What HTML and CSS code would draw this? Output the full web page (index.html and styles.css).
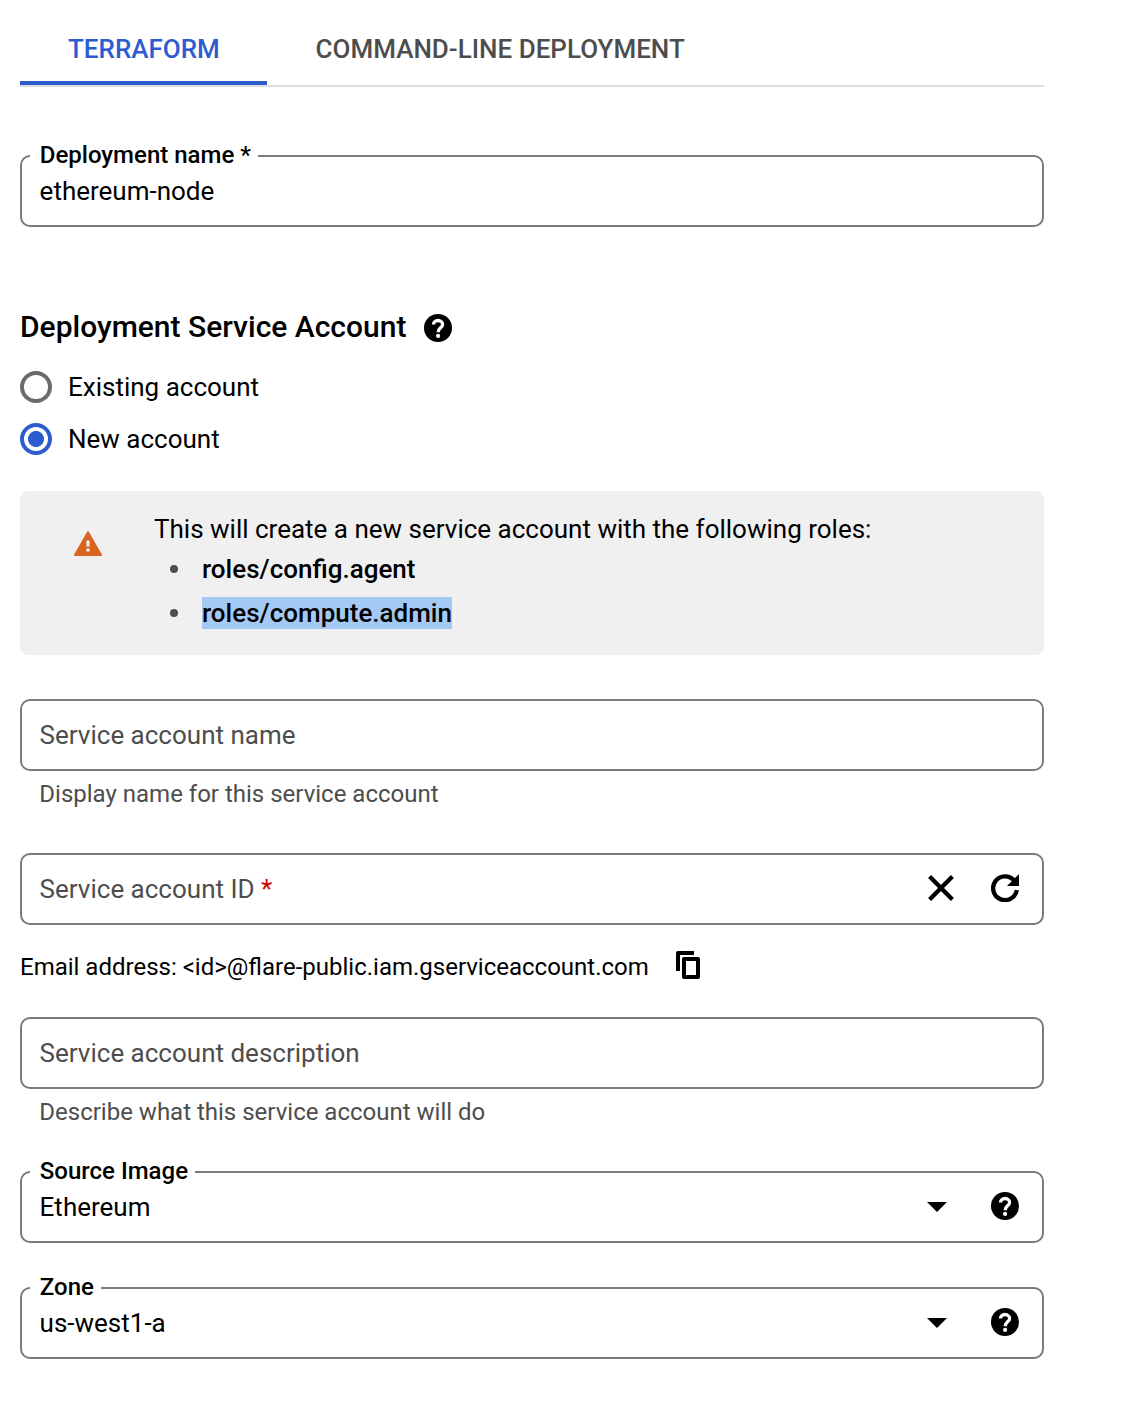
FILE: index.html
```html
<!DOCTYPE html>
<html lang="en">
<head>
<meta charset="utf-8">
<title>Deploy</title>
<link rel="stylesheet" href="styles.css">
</head>
<body>
<svg width="0" height="0" class="defs" aria-hidden="true">
  <symbol id="help" viewBox="0 0 28 28">
    <circle cx="14" cy="14" r="14"/>
    <path d="M9.5 10.6C9.500 8.200 11.400 6.500 14 6.500s4.600 1.700 4.600 4c0 3.200-4.500 3.600-4.500 7.700" fill="none" stroke="#fff" stroke-width="3.300"/>
    <circle cx="14.1" cy="21.9" r="2.100" fill="#fff"/>
  </symbol>
</svg>
<main class="form">
  <nav class="tabs">
    <a class="tab tab-active">TERRAFORM</a>
    <a class="tab tab-second">COMMAND-LINE DEPLOYMENT</a>
  </nav>

  <div class="field field-deployment">
    <label class="field-label">Deployment name *</label>
    <span class="value">ethereum-node</span>
  </div>

  <div class="heading">
    <h2>Deployment Service Account</h2>
    <svg class="icon-help"><use href="#help"/></svg>
  </div>

  <div class="radio"><span class="dot"></span><span class="radio-text">Existing account</span></div>
  <div class="radio"><span class="dot dot-on"></span><span class="radio-text">New account</span></div>

  <section class="notice">
    <svg class="icon-warning" viewBox="0 0 28 25"><path d="M13.2.7Q14-.5 14.8.7L27.8 23.3Q28.600 25 27 25H1Q-.6 25 .2 23.300Z" fill="#d8641f"/><path d="M12.400 9.400h3.200v6h-3.200zM12.400 17.400h3.200v3h-3.200z" fill="#f0f0f0"/></svg>
    <div class="notice-body">
      <p class="notice-text">This will create a new service account with the following roles:</p>
      <ul class="roles">
        <li><b class="role">roles/config.agent</b></li>
        <li><b class="role selected">roles/compute.admin</b></li>
      </ul>
    </div>
  </section>

  <div class="field field-name"><span class="placeholder">Service account name</span></div>
  <p class="hint">Display name for this service account</p>

  <div class="field field-id">
    <span class="placeholder">Service account ID <span class="required">*</span></span>
    <span class="actions">
      <svg class="icon-close" viewBox="0 0 26 26"><path d="M1.600 1.600 24.400 24.400M24.400 1.600 1.600 24.400" fill="none" stroke="#000" stroke-width="4.300"/></svg>
      <svg class="icon-refresh" viewBox="0 0 28 28"><path d="M23.200 6.600A11.900 11.900 0 1 0 25.800 16" fill="none" stroke="#000" stroke-width="4.300"/><path d="M28 0V12H16Z"/></svg>
    </span>
  </div>

  <div class="email">
    <span class="email-text">Email address: &lt;id&gt;@flare-public.iam.gserviceaccount.com</span>
    <svg class="icon-copy" viewBox="0 0 24 28"><path d="M18 0H2Q0 0 0 2V20H4V4H18Z"/><path fill-rule="evenodd" d="M8 6H22Q24 6 24 8V26Q24 28 22 28H8Q6 28 6 26V8Q6 6 8 6ZM10 10V24H20V10Z"/></svg>
  </div>

  <div class="field"><span class="placeholder">Service account description</span></div>
  <p class="hint">Describe what this service account will do</p>

  <div class="field field-source">
    <label class="field-label">Source Image</label>
    <span class="value">Ethereum</span>
    <span class="actions"><span class="caret"></span><svg class="icon-help"><use href="#help"/></svg></span>
  </div>

  <div class="field field-zone">
    <label class="field-label">Zone</label>
    <span class="value">us-west1-a</span>
    <span class="actions"><span class="caret"></span><svg class="icon-help"><use href="#help"/></svg></span>
  </div>
</main>
</body>
</html>
```

FILE: styles.css
```css
* { box-sizing: border-box; }

body {
  margin: 0;
  background: #fff;
  color: #000;
  font: 26px/32px Roboto, sans-serif;
}

h2, p, ul { margin: 0; padding: 0; }
svg { display: block; flex: none; }
.defs { position: absolute; }

.form {
  width: 1024px;
  margin-left: 20px;
  white-space: nowrap;
}

.tabs {
  display: flex;
  height: 87px;
  border-bottom: 2px solid #dadcde;
}

.tab {
  padding: 33px 48px 0;
  color: #4d4d4d;
  font-weight: 500;
}

.tab-second { padding-left: 48.6px; }

.tab-active {
  width: 247px;
  color: #2d5cce;
  border-bottom: 4px solid #2d5cce;
}

.field {
  position: relative;
  display: flex;
  align-items: center;
  justify-content: space-between;
  height: 72px;
  padding: 0 23px 0 17.6px;
  border: 2px solid #777b80;
  border-radius: 10px;
}

.field-label {
  position: absolute;
  top: -18px;
  left: 8px;
  padding: 0 7.4px 0 9.8px;
  background: #fff;
  font-size: 24px;
  font-weight: 500;
}

.field-deployment { margin-top: 68px; }

.heading {
  display: flex;
  align-items: center;
  gap: 18px;
  height: 40px;
  margin: 80px 0 14px;
}

h2 {
  font-size: 30px;
  font-weight: 500;
  line-height: 40px;
}

.icon-help { width: 28px; height: 28px; }
.heading .icon-help { margin-top: 2px; }

.radio {
  display: flex;
  align-items: center;
  gap: 16px;
  height: 52px;
}

.dot {
  width: 32px;
  height: 32px;
  border: 4px solid #6b6b6b;
  border-radius: 50%;
}

.dot-on {
  border-color: #2d5cce;
  background: radial-gradient(circle, #2d5cce 7.600px, #fff 8.400px);
}

.notice {
  display: flex;
  height: 164px;
  margin-top: 26px;
  padding: 22px 0 0 54px;
  border-radius: 8px;
  background: #f0f0f0;
}

.icon-warning {
  width: 28px;
  height: 25px;
  margin: 18px 52px 0 0;
}

.roles { list-style: none; }

.roles li {
  display: flex;
  align-items: center;
  height: 32px;
  margin-top: 8px;
}

.roles li + li { margin-top: 12px; }

.roles li::before {
  width: 8px;
  height: 8px;
  margin: 0 24px 0 16px;
  border-radius: 50%;
  background: #4d4d4d;
  content: "";
}

.role { font-weight: 500; }
.selected { background: #a4c9f4; }

.field-name { margin-top: 44px; }
.placeholder { color: #4d4d4d; }
.required { color: #d50000; }

.hint {
  margin: 7px 0 0 19.3px;
  color: #4d4d4d;
  font-size: 24px;
}

.field-id { margin-top: 43px; }

.actions { display: flex; align-items: center; }

.icon-close {
  width: 26px;
  height: 26px;
  margin-right: 37px;
}

.icon-refresh { width: 28px; height: 28px; margin-top: -2px; }
.field-id .icon-close { margin-top: -2px; }

.email {
  display: flex;
  align-items: center;
  gap: 27px;
  height: 32px;
  margin: 26px 0 34px;
  font-size: 24px;
}

.icon-copy { width: 24px; height: 28px; margin-top: -4px; }

.field-source { margin-top: 43px; }
.field-zone { margin-top: 44px; }

.caret {
  width: 20px;
  height: 10px;
  margin-right: 44px;
  background: #000;
  clip-path: polygon(0 0, 100% 0, 50% 100%);
}

.actions .icon-help { margin-top: -2px; }
```
